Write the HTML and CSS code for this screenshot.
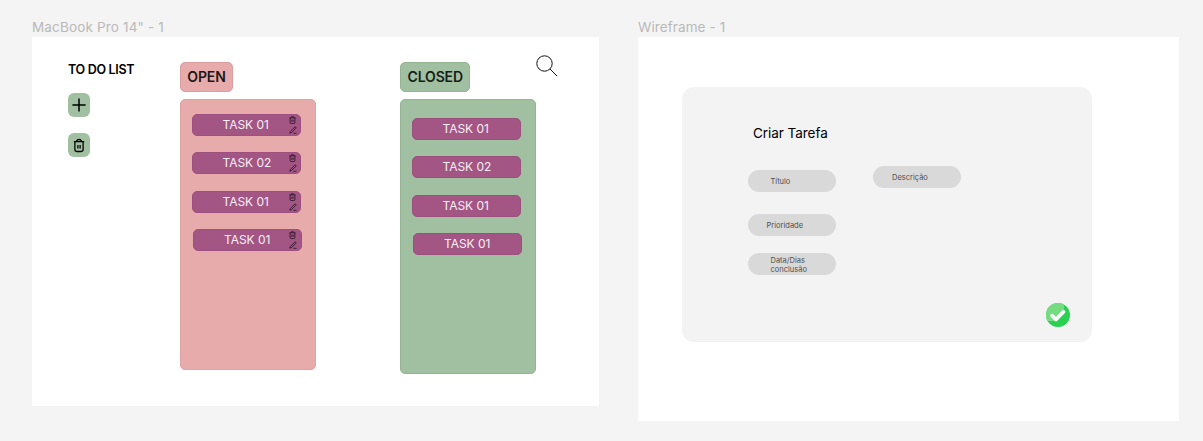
FILE: index.html
```html
<!DOCTYPE html>
<html lang="pt">
<head>
<meta charset="utf-8">
<title>To do list</title>
<link rel="stylesheet" href="styles.css">
</head>
<body>
<svg class="defs" width="0" height="0">
  <symbol id="trash" viewBox="0 0 14 16"><path d="M1 3.6h12M4.2 3.4C4.4 1.7 5.2 1 7 1s2.600.7 2.800 2.400M2.200 3.800V12.800Q2.200 15 4.400 15h5.200q2.200 0 2.200-2.200V3.800M5.700 7.300v4.200M8.300 7.300v4.200"/></symbol>
  <symbol id="pen" viewBox="0 0 8 8"><path d="M.8 7.200L1.300 5.500 5.700 1.100Q6.300.7 6.800 1.200T6.800 2.300L2.500 6.600ZM4.500 7.300H7.500"/></symbol>
</svg>
<main class="canvas">
  <section class="artboard">
    <h2 class="label mac">MacBook Pro 14" - 1</h2>
    <div class="frame board">
      <aside class="side">
        <h1 class="title"><span>TO DO LIST</span></h1>
        <button class="tool"><svg width="14" height="14" viewBox="0 0 14 14"><path d="M7 .4v13.200M.4 7h13.200"/></svg></button>
        <button class="tool"><svg class="bin" width="12" height="15"><use href="#trash"/></svg></button>
      </aside>
      <div class="column open">
        <div class="heading">OPEN</div>
        <div class="list">
          <div class="task"><span>TASK 01</span><div class="actions"><svg width="7" height="8"><use href="#trash"/></svg><svg width="8" height="8"><use href="#pen"/></svg></div></div>
          <div class="task"><span>TASK 02</span><div class="actions"><svg width="7" height="8"><use href="#trash"/></svg><svg width="8" height="8"><use href="#pen"/></svg></div></div>
          <div class="task"><span>TASK 01</span><div class="actions"><svg width="7" height="8"><use href="#trash"/></svg><svg width="8" height="8"><use href="#pen"/></svg></div></div>
          <div class="task shifted"><span>TASK 01</span><div class="actions"><svg width="7" height="8"><use href="#trash"/></svg><svg width="8" height="8"><use href="#pen"/></svg></div></div>
        </div>
      </div>
      <div class="column closed">
        <div class="heading">CLOSED</div>
        <div class="list">
          <div class="task"><span>TASK 01</span></div>
          <div class="task"><span>TASK 02</span></div>
          <div class="task"><span>TASK 01</span></div>
          <div class="task shifted"><span>TASK 01</span></div>
        </div>
      </div>
      <svg class="search" width="22" height="22" viewBox="0 0 22 22"><circle cx="8.500" cy="8.500" r="7.700"/><path d="M14 14l7.200 7.200"/></svg>
    </div>
  </section>
  <section class="artboard">
    <h2 class="label">Wireframe - 1</h2>
    <div class="frame wire">
      <form class="card">
        <h3 class="card-title">Criar Tarefa</h3>
        <div class="fields">
          <div class="stack">
            <div class="field titulo">Título</div>
            <div class="field prioridade">Prioridade</div>
            <div class="field data">Data/Dias<br>conclusão</div>
          </div>
          <div class="field descricao">Descrição</div>
        </div>
        <svg class="confirm" width="24" height="24" viewBox="0 0 24 24"><circle class="disc" cx="12" cy="12" r="12"/><path class="shine" d="M18 1.600A12 12 0 0 0 1.500 18H9L18 9Z"/><path class="tick" d="M6 12.600l4 4 7.600-7.800"/></svg>
      </form>
    </div>
  </section>
</main>
</body>
</html>
```
FILE: styles.css
```css
* { box-sizing: border-box; }
body { margin: 0; background: #f4f4f4; font-family: Inter, "Liberation Sans", sans-serif; color: #000; }
h1, h2, h3 { margin: 0; font-weight: 400; }
.defs { display: block; position: absolute; }
svg { display: block; flex: none; fill: none; stroke: #111; }
.canvas { display: flex; gap: 39px; height: 441px; padding: 17px 0 0 32px; }
.label { height: 20px; line-height: 20px; font-size: 13.500px; color: #b9b9b9; white-space: nowrap; letter-spacing: .1px; }
.mac { letter-spacing: .16px; }
.frame { background: #fff; }
.board { display: flex; width: 567px; height: 368.500px; padding: 18px 0 0 36px; }
.side { width: 112px; padding-top: 6px; }
.title { height: 16px; margin-bottom: 16.400px; line-height: 17px; font-size: 12.500px; font-weight: 600; letter-spacing: -.3px; white-space: nowrap; }
.tool { display: flex; align-items: center; justify-content: center; width: 22px; height: 23.500px; margin-bottom: 16.500px; padding: 0; border: 0; border-radius: 6px; background: #a1bfa1; }
.tool svg { stroke: #000; stroke-width: 1.500; }
.column { width: 135.500px; padding-top: 6.500px; }
.closed { margin-left: 84.500px; }
.heading { display: flex; align-items: center; justify-content: center; width: 53px; height: 30px; border: 1px solid #d99f9f; border-radius: 5px; font-size: 14px; font-weight: 600; line-height: 16px; letter-spacing: -.15px; color: #201818; }
.list { display: flex; flex-direction: column; gap: 16.300px; height: 271px; margin-top: 7.500px; padding: 14px 0 0 10.500px; border: 1px solid #dfa3a3; border-radius: 5px; }
.open .heading, .open .list { background: #e8abab; }
.closed .heading, .closed .list { background: #a1bfa1; border-color: #94b494; }
.closed .heading { width: 70.400px; color: #172017; }
.closed .list { height: 275px; padding-top: 18px; }
.task { display: flex; width: 109.400px; height: 22px; flex: none; padding-left: 30px; border: 1px solid #9d507f; border-radius: 5px; background: #a35684; color: #f8eef4; font-size: 12px; line-height: 20.600px; white-space: nowrap; }
.shifted { margin-left: 1.500px; }
.task span { width: 66px; letter-spacing: -.04px; }
.actions { display: flex; flex-direction: column; align-items: center; gap: 2px; padding-top: 1px; }
.shifted .actions { margin-left: -1.500px; }
.actions svg { stroke: #201020; stroke-width: 1.600; }
.actions svg + svg { stroke-width: .8; }
.search { margin-left: .2px; }
.wire { width: 540.500px; height: 383.500px; padding: 50.400px 0 0 44px; }
.card { display: flex; flex-direction: column; width: 410.400px; height: 254.500px; padding: 35.600px 22px 14.500px 66px; border-radius: 12px; background: #f3f3f3; }
.card-title { height: 20px; margin: 0 0 22.700px 5px; font-size: 13.500px; line-height: 21px; letter-spacing: -.05px; }
.fields { display: flex; gap: 37px; flex: 1; }
.stack { padding-top: 4.300px; }
.field { width: 88px; height: 22px; border-radius: 11px; background: #d9d9d9; color: #505050; font-size: 7.500px; line-height: 24.500px; white-space: nowrap; }
.titulo { padding-left: 22.500px; }
.prioridade { margin-top: 22.500px; padding-left: 18.500px; }
.data { margin-top: 16.200px; padding: 3.500px 0 0 22.500px; line-height: 9px; }
.descricao { padding-left: 19px; }
.confirm { align-self: flex-end; }
.disc { fill: #2ad151; stroke: none; }
.shine { fill: #76dc82; stroke: none; }
.tick { stroke: #fff; stroke-width: 3.600; stroke-linecap: round; stroke-linejoin: round; }
```
